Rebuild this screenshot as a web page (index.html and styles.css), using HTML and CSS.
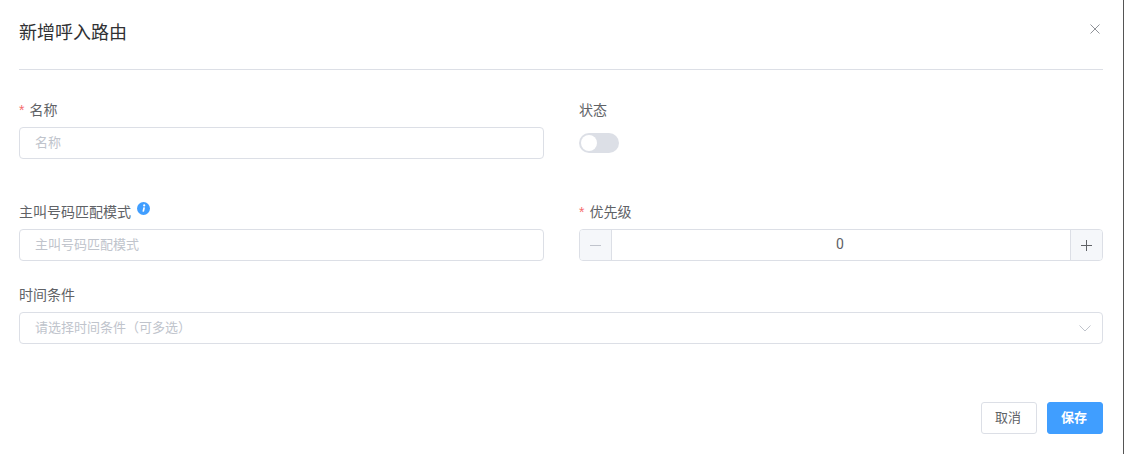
FILE: index.html
```html
<!DOCTYPE html>
<html lang="zh-CN">
<head>
    <meta charset="UTF-8">
    <title>新增呼入路由</title>
    <link rel="stylesheet" href="styles.css">
</head>
<body>
    <div class="dialog">
        <div class="dialog-header">
            <span class="dialog-title">新增呼入路由</span>
            <svg class="close-icon" width="10" height="10" viewBox="0 0 10 10"><path d="M0.5 0.5L9.5 9.5M9.5 0.5L0.5 9.5" /></svg>
        </div>

        <div class="form-grid">
            <div class="form-item item-first">
                <label class="form-label"><span class="required">*</span>名称</label>
                <input class="text-input" type="text" placeholder="名称">
            </div>
            <div class="form-item item-first">
                <label class="form-label">状态</label>
                <div class="switch-wrap">
                    <div class="switch"><span class="switch-knob"></span></div>
                </div>
            </div>

            <div class="form-item item-second">
                <label class="form-label">主叫号码匹配模式
                    <svg class="info-icon" width="13" height="13" viewBox="0 0 13 13"><circle cx="6.5" cy="6.5" r="6.5" fill="#409eff" /><circle cx="7.2" cy="3.4" r="1.1" fill="#fff" /><path d="M7.2 5.4L6.2 9.6" stroke="#fff" stroke-width="1.7" /></svg>
                </label>
                <input class="text-input" type="text" placeholder="主叫号码匹配模式">
            </div>
            <div class="form-item item-second">
                <label class="form-label"><span class="required">*</span>优先级</label>
                <div class="number-input">
                    <span class="step step-minus"><svg width="11" height="11" viewBox="0 0 11 11"><path d="M0 5.5H11" stroke="#c0c4cc" /></svg></span>
                    <span class="number-value">0</span>
                    <span class="step step-plus"><svg width="11" height="11" viewBox="0 0 11 11"><path d="M0 5.5H11M5.5 0V11" stroke="#606266" /></svg></span>
                </div>
            </div>

            <div class="form-item item-wide">
                <label class="form-label">时间条件</label>
                <div class="select-box">
                    <span class="select-placeholder">请选择时间条件（可多选）</span>
                    <svg class="select-arrow" width="12" height="7" viewBox="0 0 12 7"><path d="M0.5 0.5L6 6L11.5 0.5" /></svg>
                </div>
            </div>
        </div>

        <div class="dialog-footer">
            <button class="btn">取消</button>
            <button class="btn btn-primary">保存</button>
        </div>
    </div>
</body>
</html>
```

FILE: styles.css
```css
* {
    box-sizing: border-box;
}
html, body {
    margin: 0;
    height: 100%;
}
body {
    font-family: "Noto Sans CJK SC", "Liberation Sans", sans-serif;
    color: #606266;
    background-color: #fff;
    overflow: hidden;
}
.dialog {
    width: 1124px;
    height: 454px;
    padding: 0 20px 0 19px;
    border-right: 1px solid #555;
    background-color: #fff;
}
.dialog-header {
    display: flex;
    justify-content: space-between;
    height: 70px;
    padding-top: 19px;
    border-bottom: 1px solid #dcdfe6;
}
.dialog-title {
    font-size: 18px;
    line-height: 24px;
    color: #303133;
}
.close-icon {
    margin-top: 5px;
    margin-right: 3px;
    stroke: #909399;
    fill: none;
}
.form-grid {
    display: grid;
    grid-template-columns: 525px 524px;
    column-gap: 35px;
}
.form-item {
    display: flex;
    flex-direction: column;
}
.item-first {
    padding-top: 29px;
    height: 129px;
}
.item-second {
    height: 85px;
    padding-top: 2px;
}
.item-wide {
    grid-column: 1 / 3;
}
.form-label {
    display: block;
    height: 28px;
    font-size: 14px;
    line-height: 20px;
    color: #606266;
}
.required {
    font-family: "Liberation Sans", sans-serif;
    color: #f56c6c;
    margin-right: 5px;
}
.info-icon {
    vertical-align: 2px;
    margin-left: 3px;
}
.text-input {
    width: 100%;
    height: 32px;
    padding: 0 15px 4px;
    font-family: inherit;
    font-size: 13px;
    color: #606266;
    border: 1px solid #dcdfe6;
    border-radius: 4px;
    outline: none;
}
.text-input::placeholder {
    color: #c0c4cc;
}
.switch-wrap {
    height: 32px;
    padding-top: 6px;
}
.switch {
    width: 40px;
    height: 20px;
    padding: 2px;
    border-radius: 10px;
    background-color: #dcdfe6;
}
.switch-knob {
    display: block;
    width: 16px;
    height: 16px;
    border-radius: 50%;
    background-color: #fff;
}
.number-input {
    display: flex;
    height: 32px;
    border: 1px solid #dcdfe6;
    border-radius: 4px;
}
.step {
    display: flex;
    align-items: center;
    justify-content: center;
    width: 32px;
    background-color: #f5f7fa;
}
.step-minus {
    border-right: 1px solid #dcdfe6;
    border-radius: 3px 0 0 3px;
}
.step-plus {
    border-left: 1px solid #dcdfe6;
    border-radius: 0 3px 3px 0;
}
.number-value {
    flex: 1;
    padding-right: 2px;
    font-family: "Roboto", sans-serif;
    font-size: 14px;
    line-height: 28px;
    text-align: center;
    color: #606266;
}
.select-box {
    display: flex;
    align-items: center;
    justify-content: space-between;
    height: 32px;
    padding: 0 11px 0 15px;
    border: 1px solid #dcdfe6;
    border-radius: 4px;
}
.select-placeholder {
    font-size: 13px;
    color: #c0c4cc;
    padding-bottom: 3px;
}
.select-arrow {
    stroke: #c0c4cc;
    fill: none;
}
.dialog-footer {
    display: flex;
    justify-content: flex-end;
    gap: 10px;
    margin-top: 58px;
}
.btn {
    width: 56px;
    height: 32px;
    padding: 0 2px 3px 0;
    font-family: inherit;
    font-size: 13px;
    color: #606266;
    background-color: #fff;
    border: 1px solid #dcdfe6;
    border-radius: 3px;
}
.btn-primary {
    color: #fff;
    font-weight: bold;
    background-color: #409eff;
    border-color: #409eff;
}
```
